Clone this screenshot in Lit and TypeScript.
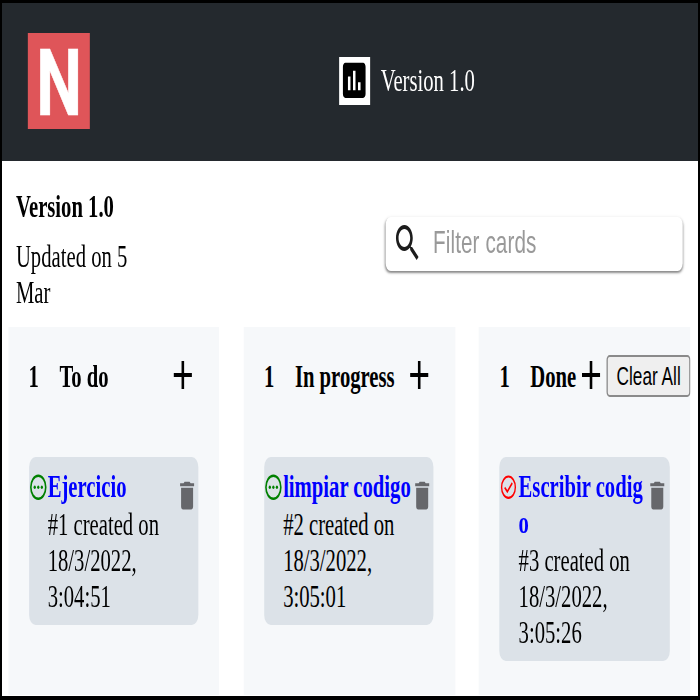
import { LitElement, html, css, svg } from "lit";
import { customElement, property } from "lit/decorators.js";

interface Card {
  id: number;
  title: string;
  date: string;
  done?: boolean;
}
interface Column {
  title: string;
  clearable?: boolean;
  cards: Card[];
}

const COLUMNS: Column[] = [
  { title: "To do", cards: [{ id: 1, title: "Ejercicio", date: "18/3/2022, 3:04:51" }] },
  { title: "In progress", cards: [{ id: 2, title: "limpiar codigo", date: "18/3/2022, 3:05:01" }] },
  { title: "Done", clearable: true, cards: [{ id: 3, title: "Escribir codigo", date: "18/3/2022, 3:05:26", done: true }] },
];

const pending = svg`<circle cx="8" cy="8" r="6.5" fill="none" stroke="currentColor" stroke-width="1.4"/>
  <circle cx="4.900" cy="8" r="1"/><circle cx="8" cy="8" r="1"/><circle cx="11.100" cy="8" r="1"/>`;
const checked = svg`<circle cx="8" cy="8" r="6" fill="none" stroke="currentColor" stroke-width="1.2"/>
  <path d="M4.700 8.200 7 10.500 11.300 5.600" fill="none" stroke="currentColor" stroke-width="1.200"/>`;

@customElement("task-card")
export class TaskCard extends LitElement {
  @property({ attribute: false }) card!: Card;

  static styles = css`
    :host {
      display: flex;
      align-items: flex-start;
      padding: 6px 0 4.200px;
      border-radius: 5px;
      background: #dce2e8;
      line-height: 18.2px;
    }
    .state {
      flex: none;
      width: 14.2px;
      height: 14.2px;
      margin: 2.200px 0 0 0.3px;
      fill: currentColor;
      color: green;
    }
    .state.done { color: red; }
    .body { width: 99.3px; flex: none; margin-left: 0.3px; }
    .title {
      display: block;
      color: #0000ff;
      font-weight: bold;
      word-break: break-all;
      margin-bottom: 1.2px;
      line-height: 18px;
    }
    .trash {
      flex: none;
      width: 18.6px;
      height: 18.6px;
      margin: 4px 0 0 -0.9px;
      fill: #66676b;
    }
  `;

  render() {
    const c = this.card;
    return html`
      <svg class="state ${c.done ? "done" : ""}" viewBox="0 0 16 16">${c.done ? checked : pending}</svg>
      <div class="body">
        <span class="title">${c.title}</span>
        <span>#${c.id} created on ${c.date}</span>
      </div>
      <svg class="trash" viewBox="0 0 24 24"><path d="M6 19c0 1.100.9 2 2 2h8c1.100 0 2-.9 2-2V7H6v12zM19 4h-3.500l-1-1h-5l-1 1H5v2h14V4z"/></svg>
    `;
  }
}

@customElement("app-root")
export class AppRoot extends LitElement {
  static styles = css`
    :host {
      display: block;
      box-sizing: border-box;
      width: 700px;
      height: 700px;
      overflow: hidden;
      border: solid #000;
      border-width: 3px 2px 4px;
      background: #fff;
      color: #000;
      font: 16px/18.2px "Liberation Serif", serif;
    }
    .stage {
      display: flex;
      flex-direction: column;
      width: 538.8px;
      height: 346.5px;
      transform: scale(1.2917, 2);
      transform-origin: 0 0;
    }
    .header {
      flex: none;
      display: flex;
      align-items: center;
      height: 78.500px;
      padding-left: 20.2px;
      box-sizing: border-box;
      background: #24292e;
      color: #fff;
    }
    .logo {
      display: flex;
      align-items: center;
      justify-content: center;
      width: 48px;
      height: 48px;
      background: #df5559;
      font: bold 46px/48px Roboto, sans-serif;
    }
    .logo span { padding-top: 2px; transform: scaleX(1.09); -webkit-text-stroke: 0.3px #fff; }
    .project { display: flex; align-items: center; gap: 8.4px; margin-left: 193.3px; }
    .chart { width: 23.4px; height: 23.4px; margin-bottom: 0.700px; background: #fff; }
    .intro {
      flex: none;
      display: flex;
      justify-content: space-between;
      height: 83.300px;
      padding: 0 12px 0 10.8px;
      box-sizing: border-box;
    }
    .info { width: 93px; padding-top: 14.600px; }
    .name { font-weight: bold; margin-bottom: 6.7px; }
    .search {
      display: flex;
      align-items: center;
      gap: 7.9px;
      width: 229.700px;
      height: 27px;
      margin-top: 28.200px;
      padding-left: 4.7px;
      box-sizing: border-box;
      border-radius: 4px;
      box-shadow: 0 1px 1.5px rgba(0, 0, 0, 0.45), 0 0 2px rgba(0, 0, 0, 0.08);
      color: #999;
      font: 16px/20px "Liberation Sans", sans-serif;
    }
    .search span { letter-spacing: 0.08px; }
    .lens { width: 24px; height: 24px; fill: #1c1c1c; }
    .board { flex: 1; display: flex; gap: 18.6px; padding: 0 0 0.7px 4.7px; }
    .column { width: 163.700px; background: #f6f8fa; }
    .head {
      display: flex;
      align-items: center;
      height: 49.600px;
      padding-left: 15.9px;
      font-weight: bold;
      white-space: nowrap;
    }
    .count { width: 23.9px; padding-top: 1.500px; }
    .label { flex: 1; padding-top: 1.500px; }
    .plus { width: 24px; height: 24px; margin: 0 15.900px 0.5px 0; }
    .clearable .label { flex: none; }
    .clearable .plus { margin-right: 0; margin-left: -0.4px; }
    .clear {
      box-sizing: border-box;
      width: 64.600px;
      height: 21px;
      margin: 0 0 0.500px auto;
      padding: 0;
      border: 1px solid #8a8a8a;
      border-radius: 2.5px;
      background: #efefef;
      color: #000;
      font: 13.333px "Liberation Sans", sans-serif;
    }
    .cards { padding: 15.500px 16.4px 0 15.9px; }
  `;

  render() {
    return html`
      <div class="stage">
        <header class="header">
          <div class="logo"><span>N</span></div>
          <div class="project">
            <svg class="chart" viewBox="0 0 24 24"><path fill-rule="evenodd" d="M5 3h14c1.100 0 2 .9 2 2v14c0 1.100-.9 2-2 2H5c-1.100 0-2-.9-2-2V5c0-1.100.9-2 2-2zM7 10v7h2v-7zM11 7v10h2V7zM15 13v4h2v-4z"/></svg>
            <span>Version 1.0</span>
          </div>
        </header>
        <section class="intro">
          <div class="info">
            <div class="name">Version 1.0</div>
            <div>Updated on 5 Mar</div>
          </div>
          <div class="search">
            <svg class="lens" viewBox="0 0 24 24"><path d="M15.500 14h-.79l-.28-.27C15.410 12.590 16 11.110 16 9.500 16 5.910 13.090 3 9.500 3S3 5.910 3 9.500 5.910 16 9.500 16c1.610 0 3.090-.59 4.230-1.570l.27.28v.79l5 4.990L20.490 19l-4.990-5zm-6 0C7.010 14 5 11.990 5 9.500S7.010 5 9.500 5 14 7.010 14 9.500 11.990 14 9.500 14z"/></svg>
            <span>Filter cards</span>
          </div>
        </section>
        <main class="board">
          ${COLUMNS.map((col) => html`
            <section class="column ${col.clearable ? "clearable" : ""}">
              <div class="head">
                <span class="count">${col.cards.length}</span>
                <span class="label">${col.title}</span>
                <svg class="plus" viewBox="0 0 24 24"><path d="M19 13h-6v6h-2v-6H5v-2h6V5h2v6h6v2z"/></svg>
                ${col.clearable ? html`<button class="clear">Clear All</button>` : ""}
              </div>
              <div class="cards">
                ${col.cards.map((c) => html`<task-card .card=${c}></task-card>`)}
              </div>
            </section>`)}
        </main>
      </div>
    `;
  }
}
